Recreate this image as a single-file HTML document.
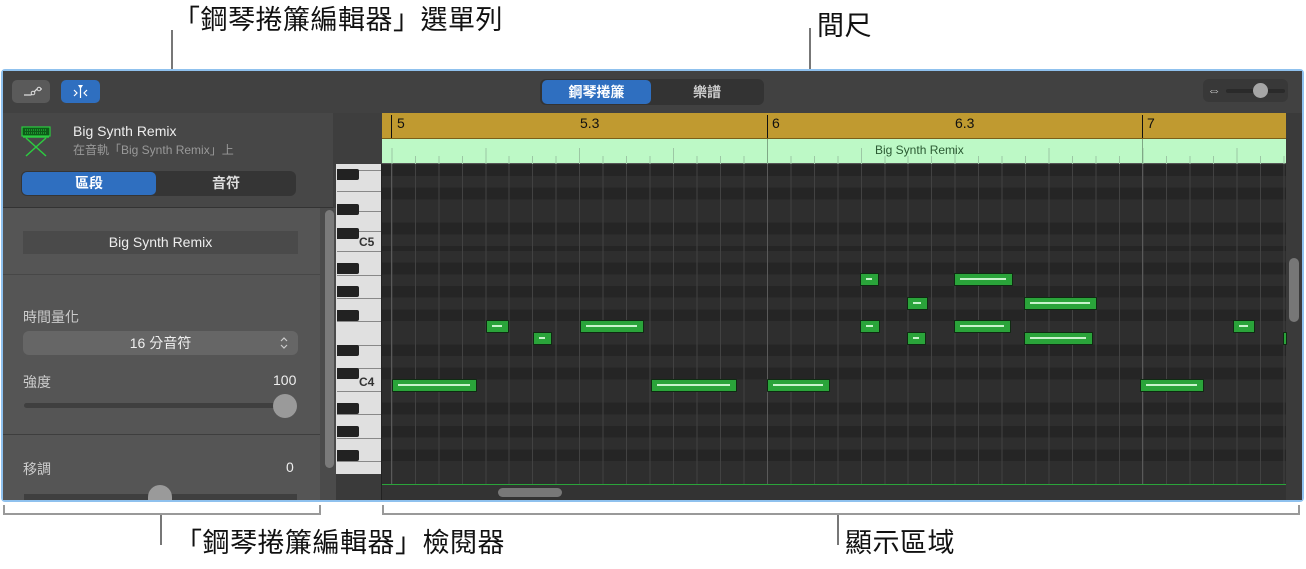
<!DOCTYPE html>
<html><head><meta charset="utf-8"><style>
*{margin:0;padding:0;box-sizing:border-box}
body{width:1306px;height:569px;background:#fff;position:relative;overflow:hidden;font-family:"Liberation Sans","Noto Sans CJK TC",sans-serif}
.a{position:absolute}
.ann{position:absolute;font-size:27px;letter-spacing:0.5px;color:#111;font-family:"Liberation Sans","Noto Sans CJK TC",sans-serif;line-height:1}
.vl{position:absolute;width:2px;background:#777}
.hl{position:absolute;height:2px;background:#999}
.note{position:absolute;height:13px;background:#2aa43a;border:1.5px solid #0f2a12;border-radius:1px}
.note i{position:absolute;left:5px;right:6px;top:4px;height:2px;background:#c8f3cc}
.bk{position:absolute;left:337px;width:22px;height:11px;background:#222;border-radius:0 2px 2px 0}
.wl{position:absolute;left:337px;width:44px;height:1px;background:#888}
</style></head><body>
<div class="ann" style="left:173px;top:7px">「鋼琴捲簾編輯器」選單列</div>
<div class="vl" style="left:171px;top:30px;height:40px"></div>
<div class="ann" style="left:817px;top:13px">間尺</div>
<div class="vl" style="left:809px;top:28px;height:86px"></div>

<div class="a" style="left:1px;top:69px;width:1303px;height:433px;border:2px solid #8fc1ee;border-radius:4px;background:#3e3e3e;overflow:hidden"></div>
<div class="a" style="left:3px;top:71px;width:1299px;height:42px;background:#414141"></div>
<div class="a" style="left:12px;top:80px;width:38px;height:23px;background:#5a5a5a;border-radius:5px"></div>
<svg class="a" style="left:12px;top:80px" width="38" height="23"><path d="M12 15 L19 15 L25 9 L30 9" stroke="#ddd" stroke-width="1.3" fill="none"/><circle cx="21" cy="13" r="1.8" fill="#5a5a5a" stroke="#ddd"/><circle cx="27" cy="9" r="1.8" fill="#5a5a5a" stroke="#ddd"/></svg>
<div class="a" style="left:61px;top:80px;width:39px;height:23px;background:#2f6fc0;border-radius:5px"></div>
<svg class="a" style="left:61px;top:80px" width="39" height="23"><path d="M19.5 8 V18" stroke="#fff" stroke-width="1.2"/><path d="M17 5 H22 L19.5 9 Z" fill="#fff"/><path d="M13 10 L16 13 L13 16 M26 10 L23 13 L26 16" stroke="#fff" stroke-width="1.2" fill="none"/></svg>
<div class="a" style="left:540px;top:79px;width:224px;height:26px;background:#333;border-radius:6px"></div>
<div class="a" style="left:542px;top:80px;width:109px;height:24px;background:#2f6fc0;border-radius:5px;color:#fff;font-size:14px;font-weight:bold;text-align:center;line-height:24px">鋼琴捲簾</div>
<div class="a" style="left:651px;top:80px;width:112px;height:24px;color:#ccc;font-size:14px;font-weight:bold;text-align:center;line-height:24px">樂譜</div>
<div class="a" style="left:1203px;top:79px;width:85px;height:23px;background:#383838;border-radius:6px"></div>
<div class="a" style="left:1207px;top:82px;color:#bbb;font-size:14px">⇔</div>
<div class="a" style="left:1226px;top:89px;width:59px;height:4px;background:#2a2a2a;border-radius:2px"></div>
<div class="a" style="left:1253px;top:83px;width:15px;height:15px;background:#a6a6a6;border-radius:50%"></div>

<div class="a" style="left:3px;top:113px;width:330px;height:95px;background:#474747"></div>
<svg class="a" style="left:20px;top:124px" width="32" height="34"><rect x="2" y="3" width="28" height="9" fill="#0d5b18" stroke="#2ccc40" stroke-width="1.2"/><path d="M5 6 H27 M5 9 H27" stroke="#2ccc40" stroke-dasharray="1 1"/><path d="M6 14 L26 32 M26 14 L6 32" stroke="#2ccc40" stroke-width="1.5"/><path d="M3 13 H29" stroke="#2ccc40" stroke-width="1.5"/></svg>
<div class="a" style="left:73px;top:123px;color:#eee;font-size:14px">Big Synth Remix</div>
<div class="a" style="left:73px;top:141px;color:#999;font-size:12px">在音軌「Big Synth Remix」上</div>
<div class="a" style="left:21px;top:171px;width:275px;height:25px;background:#353535;border-radius:6px"></div>
<div class="a" style="left:22px;top:172px;width:134px;height:23px;background:#2f6fc0;border-radius:5px;color:#fff;font-size:14px;font-weight:bold;text-align:center;line-height:23px">區段</div>
<div class="a" style="left:156px;top:172px;width:140px;height:23px;color:#ddd;font-size:14px;font-weight:bold;text-align:center;line-height:23px">音符</div>
<div class="a" style="left:3px;top:207px;width:330px;height:1px;background:#333"></div>
<div class="a" style="left:3px;top:208px;width:317px;height:292px;background:#555"></div>
<div class="a" style="left:320px;top:208px;width:16px;height:292px;background:#4b4b4b"></div>
<div class="a" style="left:325px;top:210px;width:9px;height:258px;background:#7a7a7a;border-radius:5px"></div>
<div class="a" style="left:23px;top:231px;width:275px;height:23px;background:#4a4a4a;color:#eee;font-size:14px;text-align:center;line-height:23px">Big Synth Remix</div>
<div class="a" style="left:3px;top:274px;width:317px;height:1px;background:#474747"></div>
<div class="a" style="left:23px;top:307px;color:#ccc;font-size:14px">時間量化</div>
<div class="a" style="left:23px;top:331px;width:275px;height:24px;background:#666;border-radius:6px;color:#eee;font-size:14px;text-align:center;line-height:24px">16 分音符</div>
<svg class="a" style="left:278px;top:335px" width="12" height="16"><path d="M3 6 L6 3 L9 6 M3 10 L6 13 L9 10" stroke="#ccc" stroke-width="1.2" fill="none"/></svg>
<div class="a" style="left:23px;top:372px;color:#ccc;font-size:14px">強度</div>
<div class="a" style="left:273px;top:372px;color:#eee;font-size:14px">100</div>
<div class="a" style="left:24px;top:403px;width:273px;height:5px;background:#3f3f3f;border-radius:3px"></div>
<div class="a" style="left:273px;top:394px;width:24px;height:24px;background:#9a9a9a;border-radius:50%"></div>
<div class="a" style="left:3px;top:434px;width:317px;height:1px;background:#3e3e3e"></div>
<div class="a" style="left:23px;top:459px;color:#ccc;font-size:14px">移調</div>
<div class="a" style="left:286px;top:459px;color:#eee;font-size:14px">0</div>
<div class="a" style="left:24px;top:494px;width:273px;height:6px;background:#3f3f3f"></div>
<div class="a" style="left:148px;top:485px;width:24px;height:15px;background:#9a9a9a;border-radius:12px 12px 0 0"></div>

<div class="a" style="left:336px;top:113px;width:46px;height:51px;background:#3e3e3e"></div>
<div class="a" style="left:382px;top:113px;width:904px;height:26px;background:#c09a30;border-bottom:1px solid #7a5f1a"></div>
<div class="a" style="left:391px;top:115px;width:1px;height:23px;background:#111"></div>
<div class="a" style="left:767px;top:115px;width:1px;height:23px;background:#111"></div>
<div class="a" style="left:1142px;top:115px;width:1px;height:23px;background:#111"></div>
<div class="a" style="left:397px;top:115px;font-size:14px;color:#111">5</div>
<div class="a" style="left:580px;top:115px;font-size:14px;color:#111">5.3</div>
<div class="a" style="left:772px;top:115px;font-size:14px;color:#111">6</div>
<div class="a" style="left:955px;top:115px;font-size:14px;color:#111">6.3</div>
<div class="a" style="left:1147px;top:115px;font-size:14px;color:#111">7</div>
<div class="a" style="left:382px;top:139px;width:904px;height:25px;background:#bdf9c6;border-bottom:1px solid #555"></div>
<div class="a" style="left:382px;top:156px;width:904px;height:8px;background:repeating-linear-gradient(90deg,transparent 0,transparent 9.4px,#9cc7a4 9.4px,#9cc7a4 10.4px,transparent 10.4px,transparent 23.47px)"></div>
<div class="a" style="left:382px;top:148px;width:904px;height:16px;background:repeating-linear-gradient(90deg,transparent 0,transparent 9.4px,#9cc7a4 9.4px,#9cc7a4 10.4px,transparent 10.4px,transparent 93.875px)"></div>
<div class="a" style="left:767px;top:139px;width:1px;height:25px;background:#7fa886"></div>
<div class="a" style="left:1142px;top:139px;width:1px;height:25px;background:#7fa886"></div>
<div class="a" style="left:875px;top:143px;font-size:12px;color:#2b5a33">Big Synth Remix</div>
<div class="a" style="left:1286px;top:113px;width:16px;height:387px;background:#3a3a3a"></div>

<div class="a" style="left:336px;top:164px;width:46px;height:310px;background:#e0e0e0"></div>
<div class="a" style="left:336px;top:474px;width:46px;height:26px;background:#3a3a3a"></div>
<div class="a" style="left:381px;top:164px;width:1px;height:336px;background:#222"></div>
<div class="wl" style="top:170px"></div><div class="wl" style="top:191px"></div><div class="wl" style="top:211px"></div><div class="wl" style="top:251px"></div><div class="wl" style="top:275px"></div><div class="wl" style="top:298px"></div><div class="wl" style="top:321px"></div><div class="wl" style="top:345px"></div><div class="wl" style="top:368px"></div><div class="wl" style="top:391px"></div><div class="wl" style="top:414px"></div><div class="wl" style="top:438px"></div><div class="wl" style="top:461px"></div><div class="wl" style="top:231px"></div>
<div class="bk" style="top:169px"></div><div class="bk" style="top:204px"></div><div class="bk" style="top:228px"></div><div class="bk" style="top:263px"></div><div class="bk" style="top:286px"></div><div class="bk" style="top:310px"></div><div class="bk" style="top:345px"></div><div class="bk" style="top:368px"></div><div class="bk" style="top:403px"></div><div class="bk" style="top:426px"></div><div class="bk" style="top:450px"></div>
<div class="a" style="left:359px;top:235px;font-size:12px;font-weight:bold;color:#333">C5</div>
<div class="a" style="left:359px;top:375px;font-size:12px;font-weight:bold;color:#333">C4</div>

<div class="a" style="left:382px;top:164px;width:904px;height:320px;background:repeating-linear-gradient(180deg,#2e2e2e 0,#2e2e2e 11.67px,#252525 11.67px,#252525 23.33px,#2e2e2e 23.33px,#2e2e2e 35px,#252525 35px,#252525 46.67px,#2e2e2e 46.67px,#2e2e2e 58.33px,#252525 58.33px,#252525 70px,#2e2e2e 70px,#2e2e2e 93.33px,#252525 93.33px,#252525 105px,#2e2e2e 105px,#2e2e2e 116.67px,#252525 116.67px,#252525 128.33px,#2e2e2e 128.33px,#2e2e2e 140px);background-position:0 87px"></div>
<div class="a" style="left:382px;top:164px;width:904px;height:320px;background:repeating-linear-gradient(90deg,transparent 0,transparent 9.4px,#424242 9.4px,#424242 10.4px,transparent 10.4px,transparent 23.47px)"></div>
<div class="a" style="left:767px;top:164px;width:1px;height:320px;background:#5a5a5a"></div>
<div class="a" style="left:1142px;top:164px;width:1px;height:320px;background:#5a5a5a"></div>
<div class="a" style="left:391px;top:164px;width:1px;height:320px;background:#5a5a5a"></div>
<div class="a" style="left:382px;top:484px;width:904px;height:1px;background:#2aa43a"></div>
<div class="a" style="left:382px;top:485px;width:904px;height:15px;background:#333"></div>
<div class="a" style="left:498px;top:488px;width:64px;height:9px;background:#777;border-radius:5px"></div>
<div class="a" style="left:1289px;top:258px;width:10px;height:64px;background:#777;border-radius:5px"></div>

<div class="note" style="left:392px;top:379px;width:85px"><i></i></div>
<div class="note" style="left:651px;top:379px;width:86px"><i></i></div>
<div class="note" style="left:767px;top:379px;width:63px"><i></i></div>
<div class="note" style="left:1140px;top:379px;width:64px"><i></i></div>
<div class="note" style="left:533px;top:332px;width:19px"><i></i></div>
<div class="note" style="left:907px;top:332px;width:19px"><i></i></div>
<div class="note" style="left:1024px;top:332px;width:69px"><i></i></div>
<div class="note" style="left:1283px;top:332px;width:4px"></div>
<div class="note" style="left:486px;top:320px;width:23px"><i></i></div>
<div class="note" style="left:580px;top:320px;width:64px"><i></i></div>
<div class="note" style="left:860px;top:320px;width:20px"><i></i></div>
<div class="note" style="left:954px;top:320px;width:57px"><i></i></div>
<div class="note" style="left:1233px;top:320px;width:22px"><i></i></div>
<div class="note" style="left:907px;top:297px;width:21px"><i></i></div>
<div class="note" style="left:1024px;top:297px;width:73px"><i></i></div>
<div class="note" style="left:860px;top:273px;width:19px"><i></i></div>
<div class="note" style="left:954px;top:273px;width:59px"><i></i></div>

<div class="hl" style="left:3px;top:513px;width:318px"></div>
<div class="vl" style="left:3px;top:505px;height:10px;background:#999"></div>
<div class="vl" style="left:319px;top:505px;height:10px;background:#999"></div>
<div class="vl" style="left:160px;top:515px;height:30px"></div>
<div class="ann" style="left:175px;top:530px">「鋼琴捲簾編輯器」檢閱器</div>
<div class="hl" style="left:382px;top:513px;width:918px"></div>
<div class="vl" style="left:382px;top:505px;height:10px;background:#999"></div>
<div class="vl" style="left:1298px;top:505px;height:10px;background:#999"></div>
<div class="vl" style="left:837px;top:515px;height:30px"></div>
<div class="ann" style="left:845px;top:530px">顯示區域</div>
</body></html>
